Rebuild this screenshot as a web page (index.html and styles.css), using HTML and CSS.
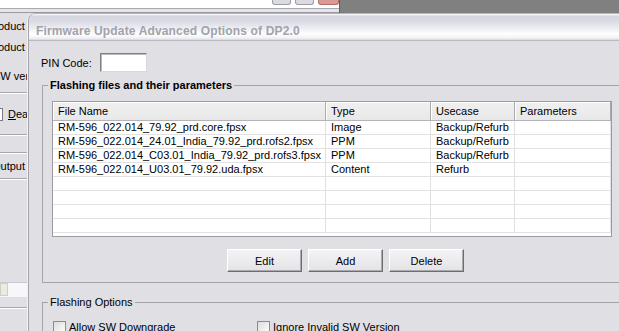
FILE: index.html
```html
<!DOCTYPE html>
<html>
<head>
<meta charset="utf-8">
<link rel="stylesheet" href="styles.css">
</head>
<body>
<div class="desktop">
  <div class="back-window">
    <div class="back-top">
      <div class="cap-btns">
        <span class="cap-btn"></span>
        <span class="cap-btn"></span>
        <span class="cap-btn cap-close"></span>
      </div>
    </div>
    <div class="back-left">
      <div class="bl-row r1"><span class="clip-pr">Product</span></div>
      <div class="bl-row r2"><span class="clip-pr">Product</span></div>
      <div class="bl-row r3"><span class="clip-sw">SW version</span></div>
      <div class="bl-sep s1"></div>
      <div class="bl-row r4"><span class="bl-check"></span><span class="bl-dead"><u>D</u>ead phone</span></div>
      <div class="bl-sep s2"></div>
      <div class="bl-sep s3"></div>
      <div class="bl-row r5"><span class="clip-out">Output</span><span class="bl-line"></span></div>
      <div class="bl-sep s4"></div>
      <div class="bl-field"><span class="bl-field-btn"></span></div>
      <div class="bl-sep s5"></div>
    </div>
  </div>

  <div class="dialog">
    <div class="titlebar">Firmware Update Advanced Options of DP2.0</div>
    <div class="dlg-body">
      <div class="pin-row">
        <span class="pin-label">PIN Code:</span>
        <span class="pin-input"></span>
      </div>

      <fieldset class="group g1">
        <legend class="legend-bold">Flashing files and their parameters</legend>
        <div class="grid">
          <div class="row head">
            <div class="cell">File Name</div>
            <div class="cell">Type</div>
            <div class="cell">Usecase</div>
            <div class="cell">Parameters</div>
          </div>
          <div class="row">
            <div class="cell">RM-596_022.014_79.92_prd.core.fpsx</div>
            <div class="cell">Image</div>
            <div class="cell">Backup/Refurb</div>
            <div class="cell"></div>
          </div>
          <div class="row">
            <div class="cell">RM-596_022.014_24.01_India_79.92_prd.rofs2.fpsx</div>
            <div class="cell">PPM</div>
            <div class="cell">Backup/Refurb</div>
            <div class="cell"></div>
          </div>
          <div class="row">
            <div class="cell">RM-596_022.014_C03.01_India_79.92_prd.rofs3.fpsx</div>
            <div class="cell">PPM</div>
            <div class="cell">Backup/Refurb</div>
            <div class="cell"></div>
          </div>
          <div class="row">
            <div class="cell">RM-596_022.014_U03.01_79.92.uda.fpsx</div>
            <div class="cell">Content</div>
            <div class="cell">Refurb</div>
            <div class="cell"></div>
          </div>
          <div class="row"><div class="cell"></div><div class="cell"></div><div class="cell"></div><div class="cell"></div></div>
          <div class="row"><div class="cell"></div><div class="cell"></div><div class="cell"></div><div class="cell"></div></div>
          <div class="row"><div class="cell"></div><div class="cell"></div><div class="cell"></div><div class="cell"></div></div>
          <div class="row"><div class="cell"></div><div class="cell"></div><div class="cell"></div><div class="cell"></div></div>
        </div>
        <div class="btn-row">
          <button class="btn">Edit</button>
          <button class="btn">Add</button>
          <button class="btn">Delete</button>
        </div>
      </fieldset>

      <fieldset class="group g2">
        <legend class="legend-normal">Flashing Options</legend>
        <div class="check-row">
          <label class="check c1"><span class="box"></span><span>Allow SW Downgrade</span></label>
          <label class="check c2"><span class="box"></span><span>Ignore Invalid SW Version</span></label>
        </div>
      </fieldset>
    </div>
  </div>
</div>
</body>
</html>
```
FILE: styles.css
```css
* { box-sizing: border-box; }
html, body { margin: 0; padding: 0; }
body {
  width: 619px;
  height: 331px;
  overflow: hidden;
  background: #808080;
  font-family: "Liberation Sans", Arial, sans-serif;
  font-size: 11px;
  color: #000;
}
.desktop {
  position: relative;
  width: 619px;
  height: 331px;
  overflow: hidden;
  background: #808080;
}

/* ---------- background window ---------- */
.back-window {
  position: absolute;
  left: 0;
  top: 0;
  width: 340px;
  height: 331px;
  background: #e0dfe3;
  border-right: 1px solid #5f5f64;
}
.back-top {
  height: 13px;
  background: #fff;
  border-bottom: 1px solid #9a9aa2;
  box-shadow: inset 0 -3px 0 #e4e4ea, inset 0 -4px 0 #a9a9b0;
}
.cap-btns {
  display: flex;
  gap: 4px;
  padding-left: 272px;
}
.cap-btn {
  width: 19px;
  height: 5px;
  background: #dadae2;
  border: 1px solid #9d9da6;
  border-top: none;
  border-radius: 0 0 3px 3px;
}
.cap-close { width: 21px; background: #dc9a94; border-color: #b0706a; }

.back-left {
  display: flex;
  flex-direction: column;
  width: 28px;
  overflow: hidden;
}
.bl-row {
  height: 14px;
  line-height: 14px;
  white-space: nowrap;
  display: flex;
  align-items: center;
}
.r1 { margin-top: 6px; }
.r2 { margin-top: 7px; }
.r3 { margin-top: 15px; }
.r4 { margin-top: 13px; }
.r5 { margin-top: 5px; }
.clip-pr { margin-left: -13px; }
.clip-sw { margin-left: -7px; }
.clip-out { margin-left: -8px; }
.bl-line { flex: 1; height: 1px; background: #a2a2a8; margin-left: 2px; min-width: 6px; }
.bl-sep {
  height: 2px;
  border-top: 1px solid #a6a6ac;
  border-bottom: 1px solid #fff;
}
.s1 { margin-top: 9px; }
.s2 { margin-top: 13px; }
.s3 { margin-top: 16px; }
.s4 { margin-top: 5px; }
.s5 { margin-top: 10px; }
.bl-check {
  width: 13px;
  height: 13px;
  margin-left: -10px;
  background: #fff;
  border: 1px solid #7a7a80;
  flex: none;
}
.bl-dead { margin-left: 5px; }
.bl-field {
  margin-top: 102px;
  height: 15px;
  background: #f7f7f9;
  border-top: 1px solid #c9c9cf;
  display: flex;
}
.bl-field-btn {
  width: 8px;
  height: 13px;
  background: #ecebe0;
  border: 1px solid #cfcfc4;
}

/* ---------- dialog ---------- */
.dialog {
  position: absolute;
  left: 28px;
  top: 13px;
  width: 620px;
  height: 330px;
  background: #e0dfe3;
  border-left: 1px solid #a4a4ac;
  border-top: 1px solid #b4b4bc;
  border-top-left-radius: 7px;
  box-shadow: -1px 0 0 #f2f2f5;
  overflow: hidden;
}
.titlebar {
  height: 27px;
  padding-left: 7px;
  padding-top: 10px;
  font-family: "Liberation Sans", Arial, sans-serif;
  font-weight: bold;
  font-size: 12px;
  letter-spacing: 0.15px;
  line-height: 14px;
  color: #a2a2aa;
  white-space: nowrap;
  background: linear-gradient(#ffffff 0px, #d7d7e1 2px, #dadae4 7px, #ececf2 14px, #ffffff 20px, #f2f2f6 24px, #d6d6de 26px);
  border-bottom: 1px solid #b9b9c1;
}
.dlg-body {
  padding-left: 13px;
}
.pin-row {
  display: flex;
  align-items: center;
  height: 19px;
  margin-top: 12px;
  margin-left: -1px;
}
.pin-label { width: 59px; }
.pin-input {
  width: 47px;
  height: 19px;
  background: #fff;
  border: 1px solid;
  border-color: #7f7f86 #d8d8dc #d8d8dc #7f7f86;
  box-shadow: inset 1px 1px 0 #b8b8be;
}

.group {
  margin: 0;
  padding: 0;
  width: 600px;
  border: 1px solid #a3a3a9;
  border-right: none;
  min-width: 0;
}
.group legend {
  margin-left: 5px;
  padding: 0 2px;
  line-height: 14px;
  height: 14px;
}
.legend-bold { font-weight: bold; }
.legend-normal { font-weight: normal; }
.g1 { margin-top: 6px; padding-bottom: 10px; }
.g2 { margin-top: 12px; height: 60px; }

/* ---------- list grid ---------- */
.grid {
  margin-top: 9px;
  margin-left: 9px;
  width: 560px;
  height: 136px;
  background: #fff;
  border: 1px solid #9b9ba1;
}
.row {
  display: grid;
  grid-template-columns: 273px 105px 84px 96px;
  height: 14px;
  border-bottom: 1px solid #e2e2e4;
}
.cell {
  border-right: 1px solid #e0e0e2;
  padding-left: 5px;
  line-height: 13px;
  white-space: nowrap;
  overflow: hidden;
}
.row.head {
  height: 19px;
  background: linear-gradient(#f1f0f0, #e9e8e8);
  border-bottom: 1px solid #b3b3b8;
}
.row.head .cell {
  line-height: 18px;
  border-right: 1px solid #a9a9ae;
  box-shadow: inset 1px 0 0 #fff, inset 0 1px 0 #fff;
}

/* ---------- buttons ---------- */
.btn-row {
  display: flex;
  gap: 6px;
  margin-top: 12px;
  margin-left: 184px;
}
.btn {
  width: 75px;
  height: 23px;
  padding: 0;
  font-family: "Liberation Sans", Arial, sans-serif;
  font-size: 11px;
  color: #000;
  background: linear-gradient(#f4f4f6, #e3e3e7);
  border: 1px solid;
  border-color: #ffffff #6c6c72 #6c6c72 #ffffff;
  box-shadow: inset -1px -1px 0 #a9a9af;
}

/* ---------- checkboxes ---------- */
.check-row {
  display: flex;
  margin-top: 12px;
  padding-left: 10px;
}
.check {
  display: flex;
  align-items: center;
  gap: 3px;
  line-height: 13px;
}
.c1 { width: 204px; }
.box {
  width: 13px;
  height: 13px;
  background: linear-gradient(135deg, #dcdcd7, #ffffff);
  border: 1px solid #8c8c92;
  flex: none;
}
```
